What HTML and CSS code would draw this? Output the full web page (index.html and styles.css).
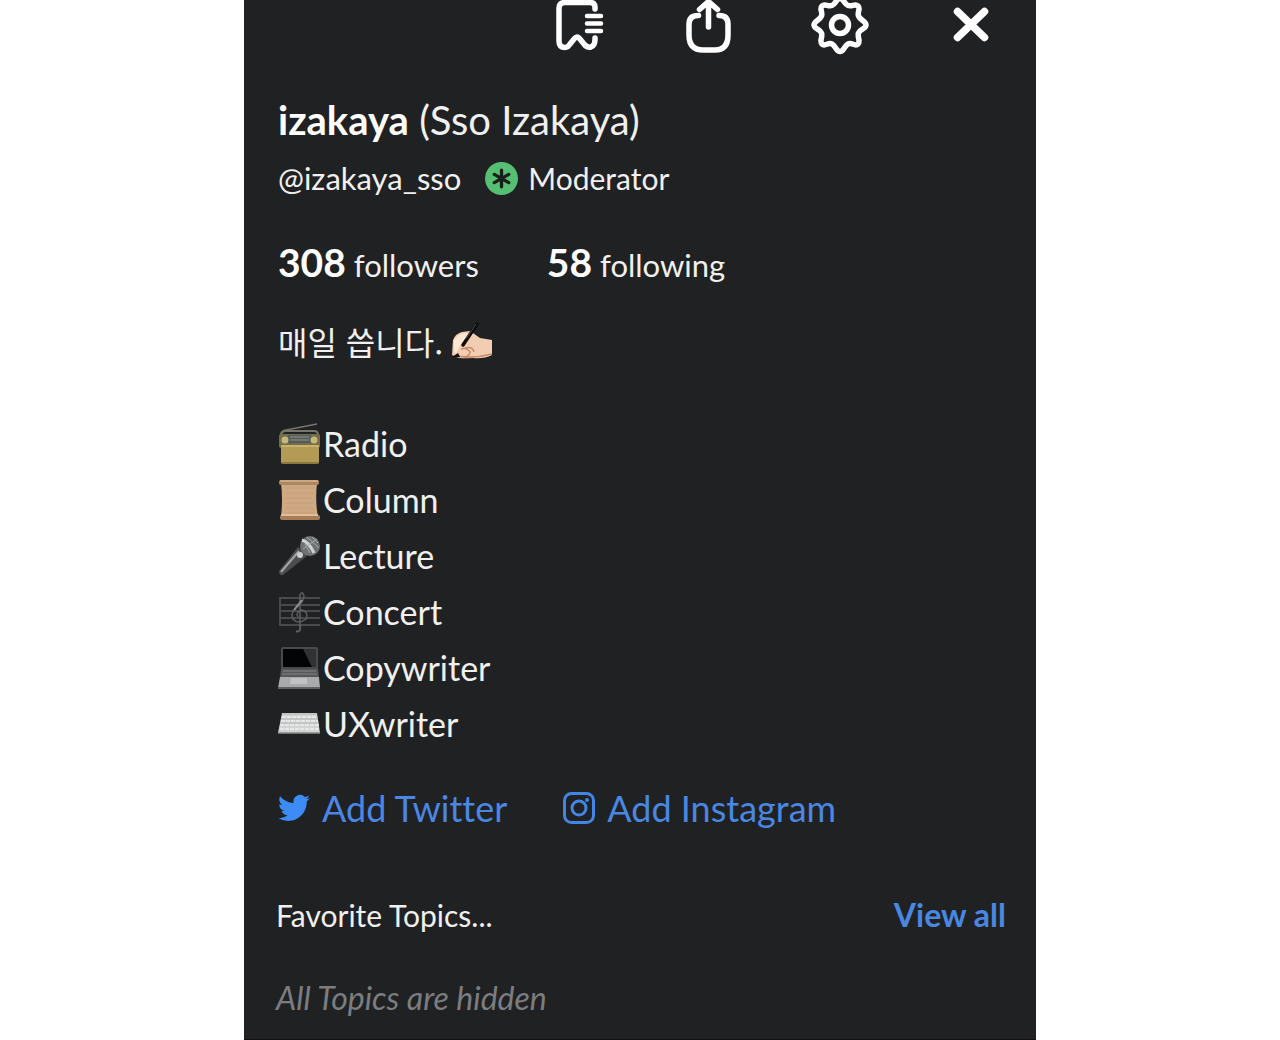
FILE: index.html
```
<!DOCTYPE html>
<html lang="ko">
<head>
    <meta charset="UTF-8">
    <meta name="viewport" content="width=device-width, initial-scale=1.0">
    <title>izakaya (Sso Izakaya)</title>
    <link rel="stylesheet" href="styles.css">
</head>
<body>
    <main class="profile">
        <!-- toolbar -->
        <header class="toolbar">
            <button class="icon-btn" type="button" aria-label="Bookmarks">
                <svg viewBox="0 0 60 60" fill="none" stroke="#fff" stroke-width="5.5" stroke-linecap="round" stroke-linejoin="round">
                    <path d="M44 9V7Q44 2.500 39 2.500H14Q8 2.500 8 8.500V41Q8 47.500 14 47.500Q17 47.500 19 44L23.500 38.500Q26 35.500 28.500 38.500L33 44Q36 48 40 47Q44 45.500 44 39.500V38"/>
                    <path stroke-width="4.5" d="M36 16H50M36 23.500H50M36 31H50"/>
                </svg>
            </button>
            <button class="icon-btn" type="button" aria-label="Share">
                <svg viewBox="0 0 60 60" fill="none" stroke="#fff" stroke-width="5.5" stroke-linecap="round" stroke-linejoin="round">
                    <path d="M17.500 15.500Q8 15.500 8 24V35Q8 50 22 50H34Q47 50 47 35V24Q47 15.500 38 15.500"/>
                    <path d="M27.500 27V3M18.500 9.500L27.500 1.500L36.500 9.500"/>
                </svg>
            </button>
            <button class="icon-btn" type="button" aria-label="Settings">
                <svg viewBox="0 0 60 60" fill="none" stroke="#fff" stroke-width="5.5" stroke-linejoin="round">
                    <path d="M29 -1.500C33 -1.500 33 4 37 5.500C41 7 44 3 47 6C50 9 46 12 47.500 16C49 20 55 21 55 25C55 29 49 29 47.500 33C46 37 50 41 47 44C44 47 41 42 37 44C33 46 33 51.500 29 51.500C25 51.500 25 46 21 44C17 42 14 47 11 44C8 41 12 37 10.500 33C9 29 3 29 3 25C3 21 9 20 10.500 16C12 12 8 9 11 6C14 3 17 7 21 5.500C25 4 25 -1.500 29 -1.500Z"/>
                    <circle cx="29" cy="25" r="8.500"/>
                </svg>
            </button>
            <button class="icon-btn" type="button" aria-label="Close">
                <svg viewBox="0 0 60 60" fill="none" stroke="#fff" stroke-width="7.5" stroke-linecap="round">
                    <path d="M16.500 11.500L43.500 37.500M43.500 11.500L16.500 37.500"/>
                </svg>
            </button>
        </header>

        <!-- name and handle -->
        <h1 class="name"><strong>izakaya</strong> (Sso Izakaya)</h1>
        <div class="handle">
            <span>@izakaya_sso</span>
            <span class="role">
                <svg class="badge" viewBox="0 0 32 32">
                    <circle cx="16" cy="16" r="16" fill="#55bf73"/>
                    <path d="M16 8V24M9 12L23 20M23 12L9 20" stroke="#1a1f1c" stroke-width="3.2" stroke-linecap="round"/>
                </svg>
                Moderator
            </span>
        </div>

        <div class="stats">
            <span><strong>308</strong> followers</span>
            <span><strong>58</strong> following</span>
        </div>

        <!-- bio -->
        <p class="bio">매일 씁니다.
            <svg class="emoji" viewBox="0 0 42 42">
                <path d="M1 35L2 20Q4 14 11 12L19 11Q22 13 29 18Q35 19 41 20V35Q33 39 22 38Q10 39 5 37Z" fill="#f2cdb2"/>
                <path d="M3 21Q6 14 14 13Q19 13 17 17L9 25L5 34Q2 31 3 21Z" fill="#ffe7d2"/>
                <path d="M10 29Q16 27 19 32Q19 36 13 37M14 28Q22 26 23 32" fill="none" stroke="#c98b6b" stroke-width="1.500"/>
                <path d="M6 36Q22 39 41 34" fill="none" stroke="#c48b6c" stroke-width="1.500"/>
                <path d="M1 37L7 33L9 37Z" fill="#111"/>
                <path d="M12 25L26 4" stroke="#0b0c0d" stroke-width="3.500" stroke-linecap="round"/>
                <path d="M15 19L25 4" stroke="#4b4e50" stroke-width="1"/>
            </svg>
        </p>

        <ul class="jobs">
            <li>
                <svg class="emoji" viewBox="0 0 42 42">
                    <path d="M3 13Q3 7 8 7L39 1" fill="none" stroke="#77766b" stroke-width="1.500"/>
                    <path d="M3 17V12Q3 8 8 8H36Q40 8 40 12V17" fill="none" stroke="#77766a" stroke-width="2"/>
                    <rect x="1" y="11" width="41" height="14" rx="2" fill="#756e45"/>
                    <rect x="10" y="12" width="23" height="8" fill="#555b5d"/>
                    <path d="M12 14H31M12 17H31" stroke="#8e9492" stroke-width="1"/>
                    <circle cx="7" cy="17" r="3.500" fill="#c4b87c"/>
                    <circle cx="36" cy="17" r="3.500" fill="#c4b87c"/>
                    <rect x="3" y="22" width="38" height="19" rx="2" fill="#b39b56"/>
                    <path d="M3 23H41" stroke="#d0bb77" stroke-width="1.500"/>
                    <path d="M4 40H40" stroke="#7e6c38" stroke-width="1.500"/>
                </svg>
                Radio
            </li>
            <li>
                <svg class="emoji" viewBox="0 0 42 42">
                    <path d="M3 4H39Q37 22 40 38H3Q5 20 3 4Z" fill="#cfa983"/>
                    <path d="M8 9H36M8 14H35M8 19H34M8 24H35M8 29H35M8 34H36" stroke="#c39c77" stroke-width="1"/>
                    <rect x="1" y="1" width="40" height="5" rx="2" fill="#ad8662"/>
                    <path d="M2 2H40" stroke="#d7b38d" stroke-width="1.500"/>
                    <rect x="2" y="36" width="40" height="5" rx="2" fill="#a77d59"/>
                    <path d="M3 36H40" stroke="#e3bd94" stroke-width="2"/>
                </svg>
                Column
            </li>
            <li>
                <svg class="emoji" viewBox="0 0 42 42">
                    <path d="M1 36L20 12L30 20L5 40Q1 41 1 36Z" fill="#4b4d4f"/>
                    <path d="M3 37L21 16" stroke="#a3a5a6" stroke-width="2"/>
                    <circle cx="32" cy="11" r="10" fill="#6f7273"/>
                    <path d="M24 5Q31 7 36 18" fill="none" stroke="#d2d4d4" stroke-width="3"/>
                    <path d="M29 2L41 13M34 2L40 8M27 9L32 18M25 14L39 4" stroke="#a7aaaa" stroke-width="1"/>
                    <circle cx="22" cy="20" r="3" fill="#cbcdce"/>
                </svg>
                Lecture
            </li>
            <li>
                <svg class="emoji" viewBox="0 0 42 42" fill="none" stroke="#515456" stroke-width="1.500">
                    <path d="M1 7H42M1 14H42M1 20H42M1 27H42M1 34H42M2 6V35" stroke="#484a4c" stroke-width="2"/>
                    <path d="M22 36L22 4Q24 -1 26 5Q26 11 18 17Q12 22 15 28Q20 34 28 28Q31 21 24 19Q17 21 20 26" stroke="#5c5f61"/>
                    <path d="M22 35Q23 42 18 40" stroke="#5c5f61" stroke-width="2"/>
                    <path d="M16 19L24 9" stroke="#8f9294" stroke-width="2"/>
                </svg>
                Concert
            </li>
            <li>
                <svg class="emoji" viewBox="0 0 42 42">
                    <path d="M3 2Q3 0 5 0H38Q40 0 40 2V22H3Z" fill="#484a4c"/>
                    <path d="M5 2H38V20H5Z" fill="#030405"/>
                    <path d="M25 2H38V20H34Z" fill="#303335"/>
                    <path d="M3 22H40L41 31H2Z" fill="#555759"/>
                    <path d="M5 24H38M4 27H39" stroke="#858789" stroke-width="1"/>
                    <path d="M2 30H41L42 41H0Z" fill="#a8aaab"/>
                    <path d="M13 31H29V37H12Z" fill="#c1c2c3"/>
                    <path d="M0 41H42" stroke="#606264" stroke-width="2"/>
                </svg>
                Copywriter
            </li>
            <li>
                <svg class="emoji" viewBox="0 0 42 42">
                    <path d="M4 10H39L42 30H0Z" fill="#d1d3d3"/>
                    <path d="M4 14H39M3 18H40M2 22H41M2 26H41" stroke="#e6e7e7" stroke-width="2" stroke-dasharray="4 1"/>
                    <path d="M4 11H39M3 16H40M2 20H41" stroke="#b4b6b7" stroke-width="1"/>
                    <path d="M0 30H42" stroke="#898b8c" stroke-width="1.500"/>
                </svg>
                UXwriter
            </li>
        </ul>

        <div class="socials">
            <a href="#">
                <svg class="social-icon" viewBox="0 0 24 24" fill="#3d8bf5">
                    <path d="M23.950 4.570a10 10 0 0 1-2.820.770 4.960 4.960 0 0 0 2.160-2.720c-.950.550-2 .950-3.130 1.180a4.920 4.920 0 0 0-8.380 4.480C7.690 8.090 4.070 6.130 1.640 3.160a4.920 4.920 0 0 0 1.520 6.570 4.900 4.900 0 0 1-2.230-.610v.060a4.920 4.920 0 0 0 3.950 4.830 5 5 0 0 1-2.210.080 4.940 4.940 0 0 0 4.600 3.420A9.870 9.870 0 0 1 0 19.540a14 14 0 0 0 7.550 2.210c9.050 0 14-7.500 14-13.980l-.020-.640a9.900 9.900 0 0 0 2.420-2.560z"/>
                </svg>
                Add Twitter
            </a>
            <a href="#">
                <svg class="social-icon" viewBox="0 0 32 32" fill="none" stroke="#4385e4" stroke-width="3">
                    <rect x="1.500" y="1.500" width="29" height="29" rx="7"/>
                    <circle cx="16" cy="16" r="7"/>
                    <circle cx="24" cy="8" r="2" fill="#4385e4" stroke="none"/>
                </svg>
                Add Instagram
            </a>
        </div>

        <!-- topics -->
        <section class="topics">
            <div class="topics-head">
                <h2>Favorite Topics...</h2>
                <a href="#">View all</a>
            </div>
            <p class="empty">All Topics are hidden</p>
        </section>
    </main>
</body>
</html>
```
FILE: styles.css
```
* {
    box-sizing: border-box;
}

body {
    margin: 0;
    background-color: #fff;
    font-family: Lato, "Noto Sans CJK KR", sans-serif;
    font-variant-ligatures: none;
    color: #f0f0f0;
}

h1, h2, p, ul {
    margin: 0;
    padding: 0;
    font-weight: normal;
}

a {
    color: #4a87e2;
    text-decoration: none;
}

svg {
    display: block;
    flex: none;
}

.profile {
    max-width: 792px;
    min-height: 100vh;
    margin: 0 auto;
    padding: 0 34px 16px;
    background-color: #202123;
    border-bottom: 1px solid #120e13;
}

.toolbar {
    display: flex;
    justify-content: flex-end;
    gap: 70px;
    padding-right: 1px;
    margin-bottom: 36px;
}

.icon-btn {
    width: 60px;
    height: 60px;
    padding: 0;
    border: none;
    background: none;
    cursor: pointer;
}

.icon-btn svg {
    width: 60px;
    height: 60px;
    overflow: visible;
}

.name {
    font-size: 40px;
    line-height: 48px;
    margin-bottom: 14px;
}

.name strong,
.stats strong {
    color: #fff;
}

.handle {
    display: flex;
    gap: 24px;
    font-size: 31px;
    line-height: 40px;
    margin-bottom: 40px;
}

.role {
    display: flex;
    align-items: center;
    gap: 10px;
    font-size: 30px;
}

.badge {
    width: 33px;
    height: 33px;
}

.stats {
    display: flex;
    gap: 68px;
    font-size: 31px;
    line-height: 48px;
    margin-bottom: 28px;
}

.stats strong {
    font-size: 39px;
}

.bio {
    display: flex;
    align-items: center;
    gap: 8px;
    font-family: "Noto Sans CJK KR", sans-serif;
    font-size: 32px;
    line-height: 48px;
    margin-bottom: 51px;
}

.emoji {
    width: 42px;
    height: 42px;
}

.jobs {
    list-style: none;
    font-size: 34px;
    line-height: 56px;
    margin-bottom: 34px;
}

.jobs li {
    display: flex;
    align-items: center;
    gap: 3px;
}

.socials {
    display: flex;
    gap: 56px;
    font-size: 36px;
    line-height: 44px;
    margin-bottom: 65px;
}

.socials a {
    display: flex;
    align-items: center;
    gap: 12px;
}

.social-icon {
    width: 32px;
    height: 32px;
}

.topics {
    margin: 0 -4px 0 -2px;
    line-height: 40px;
}

.topics-head {
    display: flex;
    justify-content: space-between;
    margin-bottom: 43px;
}

.topics h2 {
    font-size: 30px;
}

.topics a {
    font-size: 32px;
    font-weight: bold;
}

.empty {
    color: #7b7d81;
    font-size: 32px;
    font-style: italic;
}
```
